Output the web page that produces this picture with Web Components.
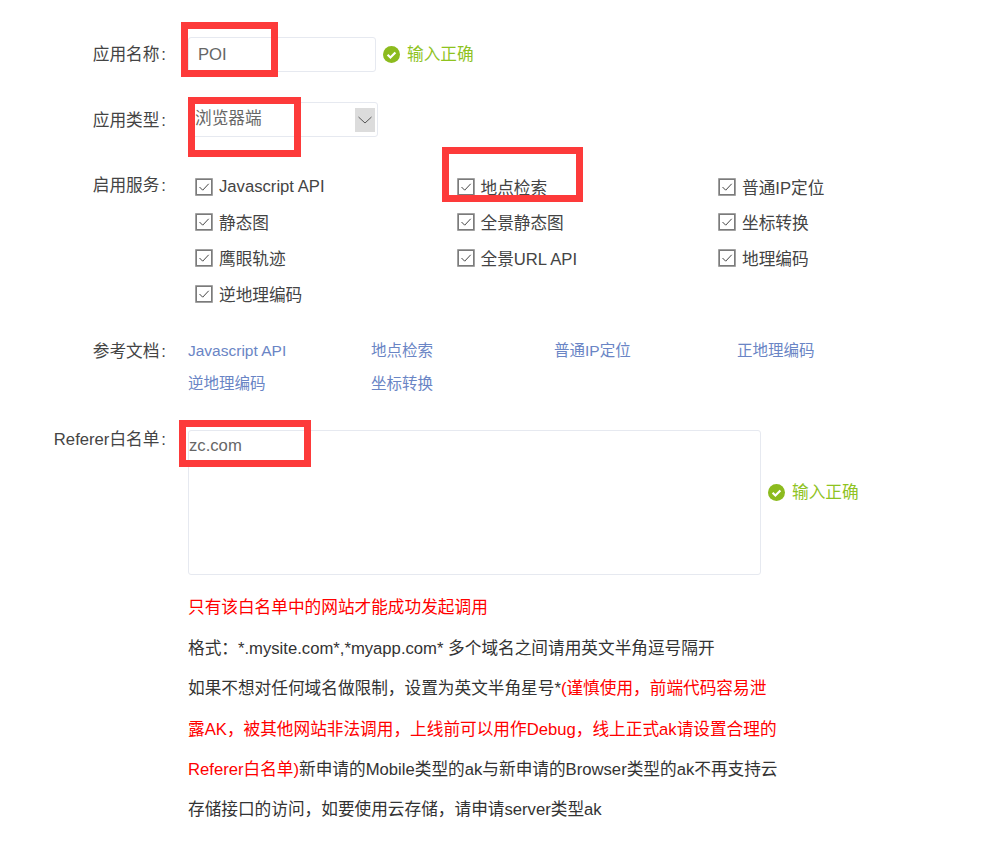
<!DOCTYPE html>
<html lang="zh">
<head>
<meta charset="utf-8">
<title>创建应用</title>
<style>
    html, body { margin: 0; padding: 0; background: #fff; }
    body {
        font-family: "Liberation Sans", "Noto Sans CJK SC", sans-serif;
        font-size: 16.67px;
        color: #333;
        width: 1001px;
        height: 849px;
        overflow: hidden;
        position: relative;
    }
</style>
</head>
<body>
<app-form></app-form>

<script>
// Fila del formulario: etiqueta a la izquierda, contenido en el slot
class FormRow extends HTMLElement {
    constructor() {
        super();
        this.attachShadow({ mode: 'open' });
        const label = this.getAttribute('label');
        this.shadowRoot.innerHTML = `
            <style>
                :host { display: flex; align-items: flex-start; }
                .label {
                    width: 167px;
                    flex: none;
                    text-align: right;
                    line-height: var(--label-lh, 35px);
                    white-space: nowrap;
                    margin-right: 21px;
                    color: #444;
                }
                .colon { margin: 0 1px 0 2px; }
                .body { flex: 1; min-width: 0; }
            </style>
            <div class="label">${label}<span class="colon">:</span></div>
            <div class="body"><slot></slot></div>
        `;
    }
}
customElements.define('form-row', FormRow);

// Mensaje verde de validación
class StatusOk extends HTMLElement {
    constructor() {
        super();
        this.attachShadow({ mode: 'open' });
        this.shadowRoot.innerHTML = `
            <style>
                :host { display: inline-flex; align-items: center; color: #8fc31f; font-size: 16.67px; }
                svg { width: 17px; height: 17px; margin-right: 7px; flex: none; }
                span { margin-bottom: 3px; }
            </style>
            <svg viewBox="0 0 17 17">
                <circle cx="8.5" cy="8.5" r="8.5" fill="#8cbb1e"/>
                <path d="M4.6 8.8l2.8 2.7 5-5" fill="none" stroke="#fff" stroke-width="2.2"/>
            </svg>
            <span><slot></slot></span>
        `;
    }
}
customElements.define('status-ok', StatusOk);

// Casilla marcada
class CheckItem extends HTMLElement {
    constructor() {
        super();
        this.attachShadow({ mode: 'open' });
        this.shadowRoot.innerHTML = `
            <style>
                :host { display: flex; align-items: center; height: 35.6px; white-space: nowrap; color: #444; }
                svg { width: 18px; height: 18px; margin-right: 6px; flex: none; }
            </style>
            <svg viewBox="0 0 18 18">
                <rect x="0.5" y="0.5" width="17" height="17" fill="#fff" stroke="#c8c8c8"/>
                <rect x="1.25" y="1.25" width="15.5" height="15.5" fill="#fff" stroke="#7b7b7b" stroke-width="1.5"/>
                <path d="M4.5 9l3.2 3.2 6-6.4" fill="none" stroke="#444" stroke-width="1"/>
            </svg>
            <slot></slot>
        `;
    }
}
customElements.define('check-item', CheckItem);

// Marco rojo de anotación sobre la captura
class RedBox extends HTMLElement {
    constructor() {
        super();
        this.attachShadow({ mode: 'open' });
        this.shadowRoot.innerHTML = `
            <style>
                :host {
                    display: block;
                    position: absolute;
                    box-sizing: border-box;
                    border: 7px solid #fd3a3a;
                    pointer-events: none;
                }
            </style>
        `;
    }
}
customElements.define('red-box', RedBox);

class AppForm extends HTMLElement {
    constructor() {
        super();
        this.attachShadow({ mode: 'open' });
        const services = ['Javascript API', '地点检索', '普通IP定位', '静态图', '全景静态图', '坐标转换',
            '鹰眼轨迹', '全景URL API', '地理编码', '逆地理编码'];
        const docs = ['Javascript API', '地点检索', '普通IP定位', '正地理编码', '逆地理编码', '坐标转换'];

        this.shadowRoot.innerHTML = `
            <style>
                :host { display: block; padding-top: 37px; }
                .field {
                    box-sizing: border-box;
                    border: 1px solid #e6e9f0;
                    border-radius: 3px;
                    background: #fff;
                    color: #666;
                }
                .line { display: flex; align-items: center; }
                .name { width: 188px; height: 35px; padding-left: 9px; line-height: 33px; }
                .line status-ok { margin-left: 7px; }
                .type {
                    width: 190px;
                    height: 35px;
                    padding-left: 6px;
                    line-height: 31px;
                    display: flex;
                    justify-content: space-between;
                }
                .arrow {
                    width: 20px;
                    height: 24px;
                    margin: 5px 2px 0 0;
                    background: #dcdcdc;
                    display: flex;
                    align-items: center;
                    justify-content: center;
                }
                .arrow svg { width: 14px; height: 8px; }
                .row-type { margin-top: 30px; --label-lh: 37px; }
                .row-services { margin-top: 29px; }
                .checks {
                    display: grid;
                    grid-template-columns: 261.5px 261.5px 1fr;
                    padding: 1px 0 0 7px;
                }
                .row-docs { margin-top: 23px; }
                .docs {
                    display: grid;
                    grid-template-columns: repeat(4, 183px);
                    grid-auto-rows: 33px;
                    font-size: 15.5px;
                    line-height: 33px;
                    color: #6a85c5;
                    white-space: nowrap;
                }
                .row-ref { margin-top: 30px; --label-lh: 20px; }
                .ref-line { display: flex; align-items: center; }
                .ref {
                    width: 573px;
                    height: 145px;
                    padding: 4px 0 0 0;
                    line-height: 22px;
                }
                .ref-line status-ok { margin-left: 7px; margin-top: -20px; }
                .notes { margin-top: 13px; width: 600px; line-height: 40.4px; color: #333; white-space: nowrap; }
                .red { color: #f00; }
            </style>
            <form-row label="应用名称">
                <div class="line">
                    <div class="field name">POI</div>
                    <status-ok>输入正确</status-ok>
                </div>
            </form-row>
            <form-row class="row-type" label="应用类型">
                <div class="field type">浏览器端
                    <div class="arrow">
                        <svg viewBox="0 0 14 8"><path d="M.5 1l6.5 6 6.5-6" fill="none" stroke="#555"/></svg>
                    </div>
                </div>
            </form-row>
            <form-row class="row-services" label="启用服务">
                <div class="checks">
                    ${services.map(s => `<check-item>${s}</check-item>`).join('')}
                </div>
            </form-row>
            <form-row class="row-docs" label="参考文档">
                <div class="docs">
                    ${docs.map(d => `<span>${d}</span>`).join('')}
                </div>
            </form-row>
            <form-row class="row-ref" label="Referer白名单">
                <div class="ref-line">
                    <div class="field ref">zc.com</div>
                    <status-ok>输入正确</status-ok>
                </div>
                <div class="notes">
                    <div class="red">只有该白名单中的网站才能成功发起调用</div>
                    <div>格式&#xFF1A;*.mysite.com*,*myapp.com* 多个域名之间请用英文半角逗号隔开</div>
                    <div>如果不想对任何域名做限制&#xFF0C;设置为英文半角星号*<span class="red">(谨慎使用&#xFF0C;前端代码容易泄</span></div>
                    <div class="red">露AK&#xFF0C;被其他网站非法调用&#xFF0C;上线前可以用作Debug&#xFF0C;线上正式ak请设置合理的</div>
                    <div><span class="red">Referer白名单)</span>新申请的Mobile类型的ak与新申请的Browser类型的ak不再支持云</div>
                    <div>存储接口的访问&#xFF0C;如要使用云存储&#xFF0C;请申请server类型ak</div>
                </div>
            </form-row>
            <red-box style="left:181px;top:22px;width:97px;height:55px"></red-box>
            <red-box style="left:188px;top:97px;width:113px;height:60px"></red-box>
            <red-box style="left:442px;top:147px;width:141px;height:55px"></red-box>
            <red-box style="left:179px;top:420px;width:132px;height:47px"></red-box>
        `;
    }
}
customElements.define('app-form', AppForm);
</script>
</body>
</html>
